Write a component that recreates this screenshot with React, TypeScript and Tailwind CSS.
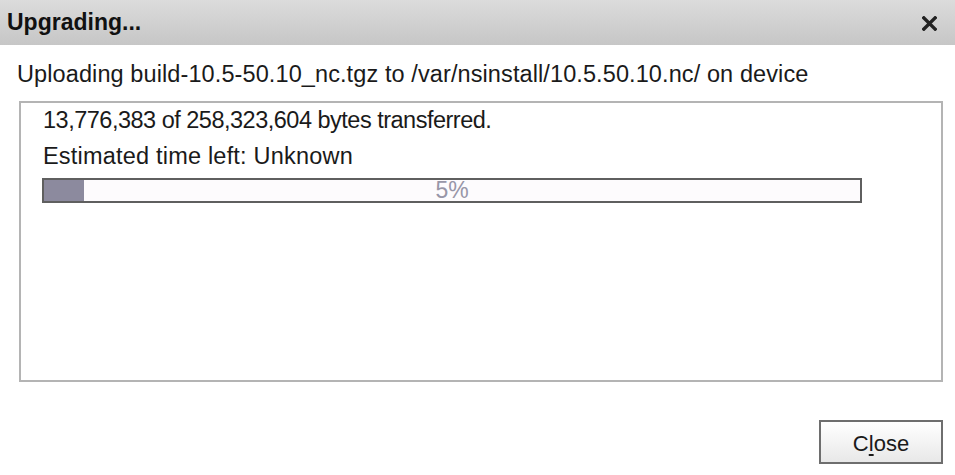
export default function App() {
  return (
    <div className="w-[955px] h-[475px] bg-white flex flex-col text-[#1a1a1a] overflow-hidden" style={{ fontFamily: '"Liberation Sans", Arial, sans-serif' }}>
      <div className="h-[45px] shrink-0 flex items-center justify-between pl-[7px] pr-[18px] bg-gradient-to-b from-[#dcdcdc] to-[#c6c6c6]">
        <span className="text-[23px] font-bold text-[#111]">Upgrading...</span>
        <svg width="15" height="15" viewBox="0 0 16 16" className="mt-[2px]">
          <path d="M2 2 L14 14 M14 2 L2 14" stroke="#222" strokeWidth="3.6" strokeLinecap="square" />
        </svg>
      </div>
      <div className="flex-1 flex flex-col pl-[17px] pr-[12px] pt-[15px]">
        <div className="text-[23.5px] leading-[28px] tracking-[0.1px]">Uploading build-10.5-50.10_nc.tgz to /var/nsinstall/10.5.50.10.nc/ on device</div>
        <div className="mt-[13px] ml-[2px] w-[924px] h-[281px] border-2 border-[#b4b4b4] bg-white pl-[22px] pt-[3px]">
          <div className="text-[23.5px] leading-[28px] tracking-[-0.5px]">13,776,383 of 258,323,604 bytes transferred.</div>
          <div className="text-[23.5px] leading-[28px] mt-[8px] tracking-[0.2px]">Estimated time left: Unknown</div>
          <div className="relative mt-[8px] w-[820px] h-[25px] border-2 border-[#5f5f5f] bg-[#fdfbfd] flex items-center justify-center -ml-[1px]">
            <div className="absolute left-0 top-0 bottom-0 w-[40px] bg-[#8c8a9e]" />
            <span className="relative text-[23px] leading-none text-[#9896a8]">5%</span>
          </div>
        </div>
        <div className="flex justify-end mt-[38px]">
          <button className="w-[124px] h-[44px] border-2 border-[#6e6e6e] bg-gradient-to-b from-[#ffffff] to-[#e8e8e8] text-[22px] text-[#1a1a1a] leading-none pt-[3px]">
            C<span className="underline underline-offset-[3px]">l</span>ose
          </button>
        </div>
      </div>
    </div>
  );
}
